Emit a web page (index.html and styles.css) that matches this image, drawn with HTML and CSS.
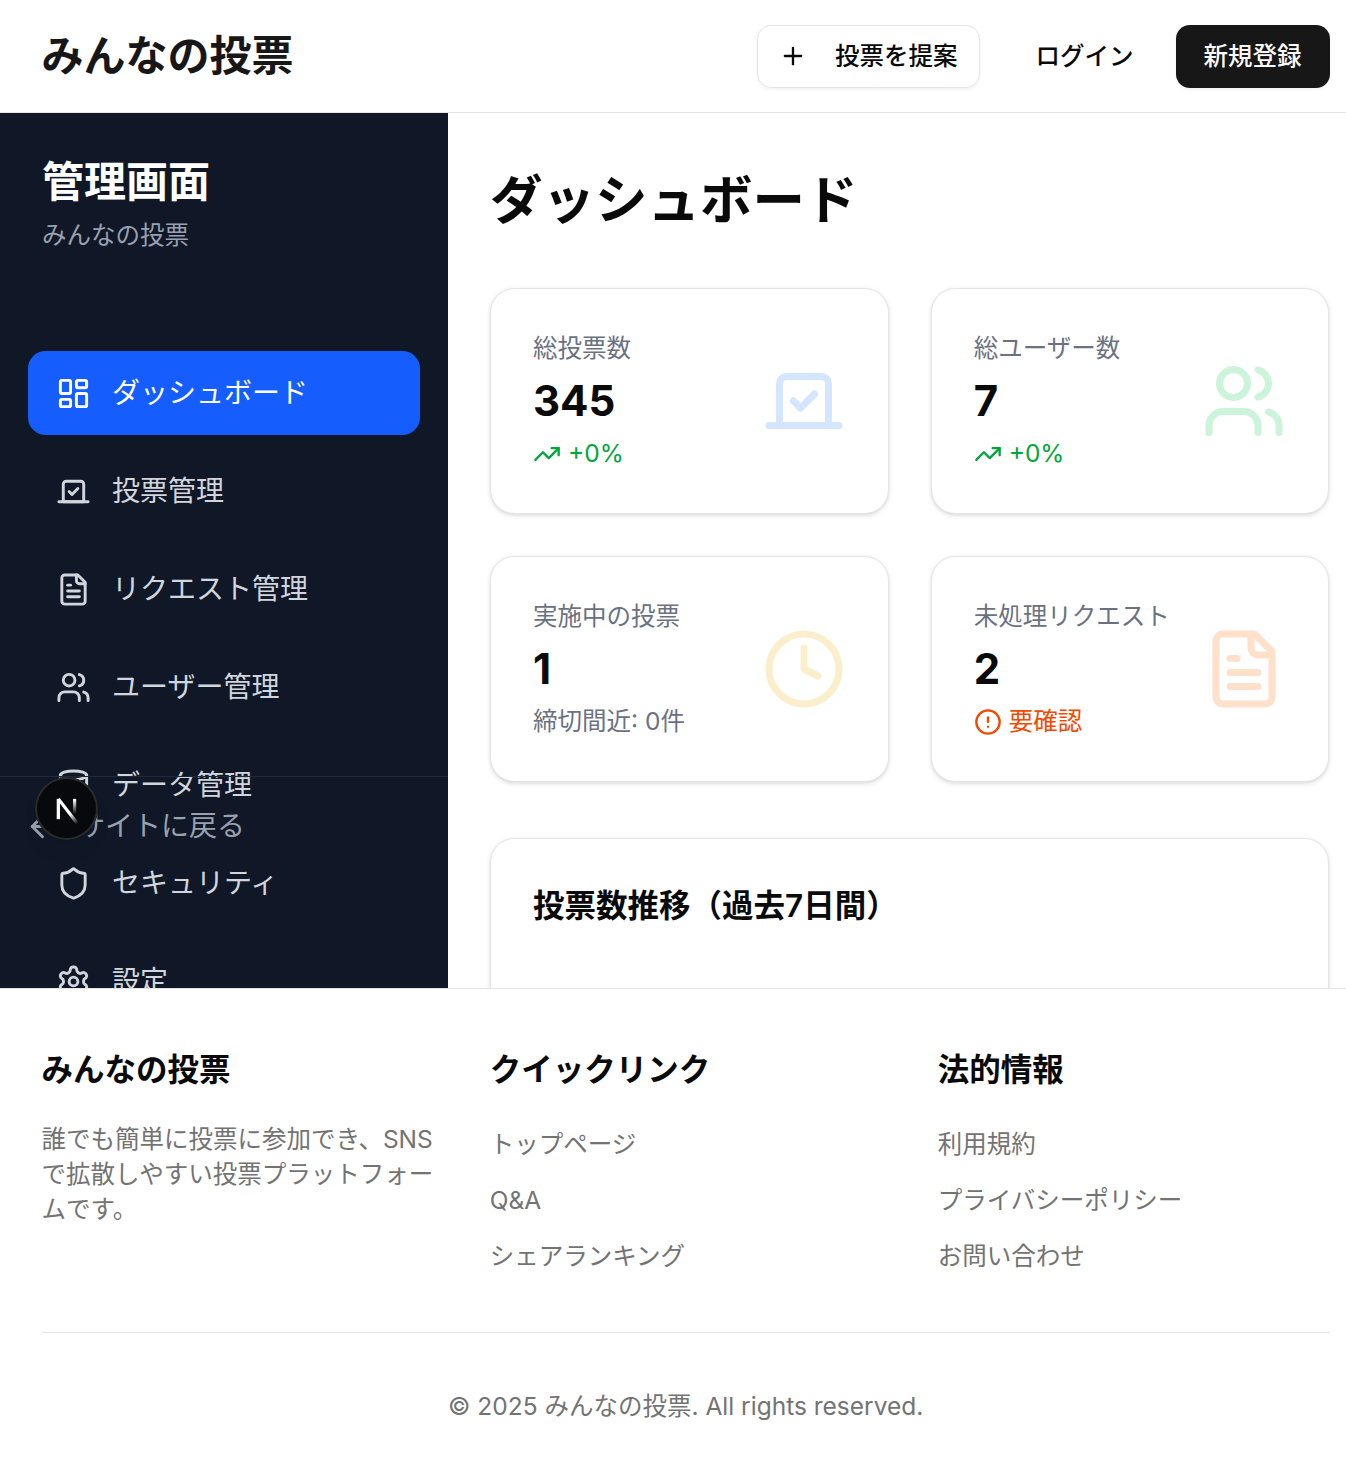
FILE: index.html
```html
<!DOCTYPE html>
<html lang="ja">
<head>
<meta charset="utf-8">
<title>みんなの投票 管理画面</title>
<link rel="stylesheet" href="styles.css">
</head>
<body>
<svg class="defs" aria-hidden="true">
  <symbol id="vote" viewBox="0 0 24 24"><path d="m9 12 2 2 4-4"/><path d="M5 7c0-1.1.9-2 2-2h10a2 2 0 0 1 2 2v12H5V7Z"/><path d="M22 19H2"/></symbol>
  <symbol id="users" viewBox="0 0 24 24"><path d="M16 21v-2a4 4 0 0 0-4-4H6a4 4 0 0 0-4 4v2"/><circle cx="9" cy="7" r="4"/><path d="M22 21v-2a4 4 0 0 0-3-3.87"/><path d="M16 3.13a4 4 0 0 1 0 7.75"/></symbol>
  <symbol id="file" viewBox="0 0 24 24"><path d="M15 2H6a2 2 0 0 0-2 2v16a2 2 0 0 0 2 2h12a2 2 0 0 0 2-2V7Z"/><path d="M14 2v4a2 2 0 0 0 2 2h4"/><path d="M10 9H8"/><path d="M16 13H8"/><path d="M16 17H8"/></symbol>
  <symbol id="trend" viewBox="0 0 24 24"><path d="M16 7h6v6"/><path d="m22 7-8.5 8.5-5-5L2 17"/></symbol>
</svg>
<header class="site-header">
  <a class="logo">みんなの投票</a>
  <div class="header-actions">
    <a class="btn btn-outline"><svg class="icon icon-sm" viewBox="0 0 24 24"><path d="M5 12h14"/><path d="M12 5v14"/></svg>投票を提案</a>
    <div class="auth">
      <a class="btn">ログイン</a>
      <a class="btn btn-primary">新規登録</a>
    </div>
  </div>
</header>
<div class="admin">
  <aside class="sidebar">
    <div class="sidebar-head">
      <h2>管理画面</h2>
      <p>みんなの投票</p>
    </div>
    <nav class="sidebar-nav">
      <a class="nav-item active"><svg class="icon" viewBox="0 0 24 24"><rect width="7" height="9" x="3" y="3" rx="1"/><rect width="7" height="5" x="14" y="3" rx="1"/><rect width="7" height="9" x="14" y="12" rx="1"/><rect width="7" height="5" x="3" y="16" rx="1"/></svg>ダッシュボード</a>
      <a class="nav-item"><svg class="icon"><use href="#vote"/></svg>投票管理</a>
      <a class="nav-item"><svg class="icon"><use href="#file"/></svg>リクエスト管理</a>
      <a class="nav-item"><svg class="icon"><use href="#users"/></svg>ユーザー管理</a>
      <a class="nav-item"><svg class="icon" viewBox="0 0 24 24"><ellipse cx="12" cy="5" rx="9" ry="3"/><path d="M3 5v14a9 3 0 0 0 18 0V5"/><path d="M3 12a9 3 0 0 0 18 0"/></svg>データ管理</a>
      <a class="nav-item"><svg class="icon" viewBox="0 0 24 24"><path d="M20 13c0 5-3.5 7.5-7.66 8.95a1 1 0 0 1-.67-.01C7.5 20.5 4 18 4 13V6a1 1 0 0 1 1-1c2 0 4.5-1.2 6.24-2.72a1.17 1.17 0 0 1 1.52 0C14.51 3.81 17 5 19 5a1 1 0 0 1 1 1z"/></svg>セキュリティ</a>
      <a class="nav-item"><svg class="icon" viewBox="0 0 24 24"><path d="M12.22 2h-.44a2 2 0 0 0-2 2v.18a2 2 0 0 1-1 1.73l-.43.25a2 2 0 0 1-2 0l-.15-.08a2 2 0 0 0-2.73.73l-.22.38a2 2 0 0 0 .73 2.73l.15.1a2 2 0 0 1 1 1.72v.51a2 2 0 0 1-1 1.74l-.15.09a2 2 0 0 0-.73 2.73l.22.38a2 2 0 0 0 2.73.73l.15-.08a2 2 0 0 1 2 0l.43.25a2 2 0 0 1 1 1.73V20a2 2 0 0 0 2 2h.44a2 2 0 0 0 2-2v-.18a2 2 0 0 1 1-1.73l.43-.25a2 2 0 0 1 2 0l.15.08a2 2 0 0 0 2.73-.73l.22-.39a2 2 0 0 0-.73-2.73l-.15-.08a2 2 0 0 1-1-1.74v-.5a2 2 0 0 1 1-1.74l.15-.09a2 2 0 0 0 .73-2.73l-.22-.38a2 2 0 0 0-2.73-.73l-.15.08a2 2 0 0 1-2 0l-.43-.25a2 2 0 0 1-1-1.73V4a2 2 0 0 0-2-2z"/><circle cx="12" cy="12" r="3"/></svg>設定</a>
    </nav>
    <div class="sidebar-foot">
      <a class="back"><svg class="icon" viewBox="0 0 24 24"><path d="m12 19-7-7 7-7"/><path d="M19 12H5"/></svg>サイトに戻る</a>
    </div>
  </aside>
  <main class="main">
    <h1>ダッシュボード</h1>
    <div class="stats">
      <section class="card stat">
        <div><p class="label">総投票数</p><p class="value">345</p><p class="note green"><svg class="icon icon-sm"><use href="#trend"/></svg>+0%</p></div>
        <svg class="icon icon-lg blue"><use href="#vote"/></svg>
      </section>
      <section class="card stat">
        <div><p class="label">総ユーザー数</p><p class="value">7</p><p class="note green"><svg class="icon icon-sm"><use href="#trend"/></svg>+0%</p></div>
        <svg class="icon icon-lg emerald"><use href="#users"/></svg>
      </section>
      <section class="card stat">
        <div><p class="label">実施中の投票</p><p class="value">1</p><p class="note">締切間近: 0件</p></div>
        <svg class="icon icon-lg yellow" viewBox="0 0 24 24"><circle cx="12" cy="12" r="10"/><path d="M12 6v6l4 2"/></svg>
      </section>
      <section class="card stat">
        <div><p class="label">未処理リクエスト</p><p class="value">2</p><p class="note orange"><svg class="icon icon-sm" viewBox="0 0 24 24"><circle cx="12" cy="12" r="10"/><path d="M12 8v4"/><path d="M12 16h.01"/></svg>要確認</p></div>
        <svg class="icon icon-lg amber"><use href="#file"/></svg>
      </section>
    </div>
    <section class="card chart"><h3>投票数推移（過去7日間）</h3></section>
  </main>
</div>
<footer class="site-footer">
  <div class="footer-cols">
    <div><h3>みんなの投票</h3><p>誰でも簡単に投票に参加でき、SNSで拡散しやすい投票プラットフォームです。</p></div>
    <div><h3>クイックリンク</h3><ul><li><a>トップページ</a></li><li><a>Q&amp;A</a></li><li><a>シェアランキング</a></li></ul></div>
    <div><h3>法的情報</h3><ul><li><a>利用規約</a></li><li><a>プライバシーポリシー</a></li><li><a>お問い合わせ</a></li></ul></div>
  </div>
  <p class="copyright">© 2025 みんなの投票. All rights reserved.</p>
</footer>
<div class="dev-badge">
  <svg viewBox="0 0 36 36" fill="none">
    <defs>
      <linearGradient id="g1" gradientUnits="userSpaceOnUse" x1="9" y1="9.6" x2="13.3" y2="15.2"><stop stop-color="#fff"/><stop offset="1" stop-color="#fff" stop-opacity="0"/></linearGradient>
      <linearGradient id="g2" gradientUnits="userSpaceOnUse" x1="11.8" y1="1.4" x2="11.8" y2="9.6"><stop stop-color="#fff"/><stop offset="1" stop-color="#fff" stop-opacity="0"/></linearGradient>
    </defs>
    <g transform="translate(11 11.5)" stroke-width="1.86"><path d="M13.3 15.2 2.34 1" stroke="url(#g1)"/><path d="M2.34 1v11.6" stroke="#fff"/><path d="M11.625 1v10" stroke="url(#g2)"/></g>
  </svg>
</div>
</body>
</html>
```
FILE: styles.css
```css
* { box-sizing: border-box; margin: 0; padding: 0; }
html { font-size: 28px; overflow: hidden; }
body {
  position: relative;
  width: 1371.4px;
  background: #fff;
  color: #0a0a0a;
  font-family: Inter, "Noto Sans CJK JP", sans-serif;
  line-height: 1.5;
}
ul { list-style: none; }
.defs { position: absolute; width: 0; height: 0; }
.icon {
  width: 35px;
  height: 35px;
  flex-shrink: 0;
  fill: none;
  stroke: currentColor;
  stroke-width: 2;
  stroke-linecap: round;
  stroke-linejoin: round;
}
.icon-sm { width: 28px; height: 28px; }
.icon-lg { width: 84px; height: 84px; opacity: .2; }

.site-header {
  display: flex;
  align-items: center;
  justify-content: space-between;
  height: 113px;
  padding: 0 41.8px 0 41.6px;
  border-bottom: 1px solid #e5e5e5;
}
.logo { font-size: 42px; line-height: 56px; font-weight: 700; color: #171717; }
.header-actions { display: flex; align-items: center; gap: 28px; }
.auth { display: flex; gap: 14px; }
.btn {
  display: flex;
  align-items: center;
  height: 63px;
  padding: 0 28px;
  border-radius: 14px;
  font-size: 24.5px;
  line-height: 35px;
  font-weight: 500;
}
.btn-outline { gap: 28px; padding: 0 21px; border: 1px solid #e5e5e5; box-shadow: 0 1.75px 3.5px rgba(0, 0, 0, .05); }
.btn-primary { background: #171717; color: #fafafa; box-shadow: 0 1.75px 3.5px rgba(0, 0, 0, .05); }

.admin { display: flex; height: 875px; overflow: hidden; }
.sidebar { position: relative; width: 448px; flex-shrink: 0; overflow: hidden; background: #101828; color: #fff; }
.sidebar-head { padding: 41.4px 42px 42px; }
.sidebar-head h2 { font-size: 42px; line-height: 56px; font-weight: 700; }
.sidebar-head p { margin-top: 7.6px; font-size: 24.5px; line-height: 35px; color: #99a1af; }
.sidebar-nav { display: flex; flex-direction: column; gap: 14px; padding: 56.1px 28px 0; }
.nav-item {
  display: flex;
  align-items: center;
  gap: 21px;
  height: 84px;
  flex-shrink: 0;
  padding: 0 28px;
  border-radius: 17.5px;
  color: #d1d5dc;
}
.nav-item.active { background: #155dfc; color: #fff; }
.sidebar-foot { position: absolute; left: 0; right: 0; bottom: 113px; padding: 28px 24.5px; border-top: 1px solid #1e2939; }
.back { display: flex; align-items: center; gap: 17.5px; color: #99a1af; }

.main { flex: 1; padding: 56px 42px; }
.main h1 { margin: -.4px 0 56.4px; font-size: 52.5px; line-height: 63px; font-weight: 700; }
.stats { display: grid; grid-template-columns: 1fr 1fr; gap: 42px; margin-bottom: 56px; }
.card {
  padding: 42px;
  border: 1px solid #e5e5e5;
  border-radius: 24.5px;
  background: #fff;
  box-shadow: 0 1.75px 5.25px rgba(0, 0, 0, .1), 0 1.75px 3.5px -1.75px rgba(0, 0, 0, .1);
}
.stat { display: flex; align-items: center; justify-content: space-between; }
.label, .note { font-size: 24.5px; line-height: 35px; color: #6a7282; }
.value { margin: 7px 0; font-size: 42px; line-height: 56px; font-weight: 700; }
.note { display: flex; align-items: center; gap: 7px; }
.green { color: #00a63e; }
.orange { color: #f54900; }
.blue { color: #2b7fff; }
.emerald { color: #00c950; }
.yellow { color: #f0b100; }
.amber { color: #ff6900; }
.chart { height: 600px; }
.chart h3 { font-size: 31.5px; line-height: 49px; font-weight: 600; }

.site-footer { padding: 56px 41.6px; border-top: 1px solid #e5e5e5; }
.footer-cols { display: grid; grid-template-columns: repeat(3, 1fr); gap: 56px; margin-bottom: 56px; }
.footer-cols h3 { margin-bottom: 28px; font-size: 31.5px; line-height: 49px; font-weight: 600; }
.footer-cols p, .copyright { font-size: 24.5px; line-height: 35px; color: #737373; }
.footer-cols ul { display: flex; flex-direction: column; gap: 14px; }
.footer-cols li { height: 42px; line-height: 42px; }
.footer-cols a { font-size: 24.5px; color: #737373; }
.copyright { padding-top: 56px; border-top: 1px solid #e5e5e5; text-align: center; }

.dev-badge {
  position: absolute;
  left: 35px;
  top: 777px;
  width: 63px;
  height: 63px;
  border-radius: 50%;
  background: #08090c;
  box-shadow: inset 0 0 0 2px #2b2b2c, 0 14px 21px -7px rgba(0, 0, 0, .12);
}
.dev-badge svg { display: block; width: 63px; height: 63px; }
```
